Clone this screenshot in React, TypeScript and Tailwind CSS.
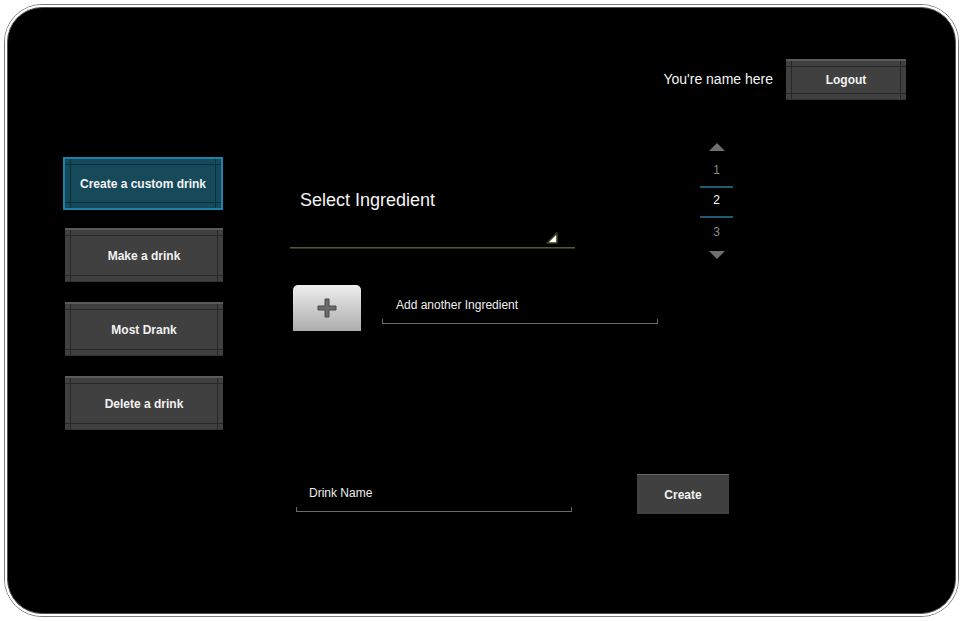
import type { ReactNode } from 'react';

function SliceButton({ label, active = false, className = '' }: { label: string; active?: boolean; className?: string }) {
  const line = active ? 'bg-[#0c2f3b]' : 'bg-[#272727]';
  return (
    <button
      className={`relative flex items-center justify-center font-bold text-[12px] text-[#f2f2f2] ${
        active
          ? 'bg-[#164a5b] border-2 border-[#1d82aa]'
          : 'bg-[#404040] border-t-2 border-t-[#5a5a5a] border-b border-b-[#333]'
      } ${className}`}
    >
      {/* 9-slice grid lines */}
      <span className={`absolute left-0 right-0 top-[5px] h-px ${line}`} />
      <span className={`absolute left-0 right-0 bottom-[5px] h-px ${line}`} />
      <span className={`absolute top-0 bottom-0 left-[5px] w-px ${line}`} />
      <span className={`absolute top-0 bottom-0 right-[5px] w-px ${line}`} />
      <span className="relative">{label}</span>
    </button>
  );
}

function LineField({ label, className = '', textPad = '' }: { label: ReactNode; className?: string; textPad?: string }) {
  return (
    <div className={className}>
      <div className={`text-[12px] leading-[14px] text-[#eeeeee] ${textPad}`}>{label}</div>
      <div className="h-[5px] border-x border-b border-[#6a6a6a]" />
    </div>
  );
}

function Arrow({ up }: { up: boolean }) {
  return (
    <svg width="16" height="8" viewBox="0 0 16 8">
      <polygon points={up ? '8,0 16,8 0,8' : '0,0 16,0 8,8'} fill="#6f6f6f" />
    </svg>
  );
}

export default function App() {
  return (
    <div className="min-h-screen bg-white p-[4px] font-['Liberation_Sans',Arial,sans-serif]">
      <div className="w-[955px] h-[613px] rounded-[38px] border border-[#7a7a7a]">
        <div className="h-full rounded-[37px] border-2 border-white">
          <div className="h-full rounded-[35px] border border-[#555] bg-black overflow-hidden">
            {/* Header */}
            <div className="flex justify-end items-center gap-[13px] pt-[51px] pr-[49px]">
              <span className="text-[14px] text-[#f4f4f4]">You're name here</span>
              <SliceButton label="Logout" className="w-[120px] h-[41px]" />
            </div>

            {/* Body */}
            <div className="flex mt-[41px]">
              {/* Menu */}
              <div className="flex flex-col pl-[55px] pt-[16px]">
                <SliceButton label="Create a custom drink" active className="w-[160px] h-[53px]" />
                <SliceButton label="Make a drink" className="w-[158px] h-[54px] ml-[2px] mt-[18px]" />
                <SliceButton label="Most Drank" className="w-[158px] h-[54px] ml-[2px] mt-[20px]" />
                <SliceButton label="Delete a drink" className="w-[158px] h-[54px] ml-[2px] mt-[20px]" />
              </div>

              {/* Editor */}
              <div className="flex flex-col ml-[67px]">
                <div className="flex">
                  <div className="w-[285px] pt-[49px]">
                    <div className="pl-[10px] text-[18px] leading-[21px] text-[#f4f4f4]">Select Ingredient</div>
                    <div className="flex justify-end pr-[17px] mt-[21px]">
                      <svg width="12" height="12" viewBox="0 0 12 12">
                        <polygon points="11,1 11,11 1,11" fill="#ffffff" stroke="#35401a" strokeWidth="1.6" strokeLinejoin="round" />
                      </svg>
                    </div>
                    <div className="mt-[3px] h-px bg-[#4f5c27]" />
                    <div className="h-px bg-[#2c3314]" />
                  </div>

                  <div className="ml-[125px] w-[33px] flex flex-col items-center text-[12px] leading-[14px]">
                    <div className="mt-[2px]"><Arrow up /></div>
                    <span className="mt-[12px] text-[#8a8a8a]">1</span>
                    <div className="mt-[9px] h-[2px] w-full bg-[#1c5b70]" />
                    <span className="mt-[5px] text-white">2</span>
                    <div className="mt-[9px] h-[2px] w-full bg-[#1c5b70]" />
                    <span className="mt-[7px] text-[#8a8a8a]">3</span>
                    <div className="mt-[12px]"><Arrow up={false} /></div>
                  </div>
                </div>

                {/* Add ingredient row */}
                <div className="flex items-start mt-[26px]">
                  <button className="ml-[3px] w-[68px] h-[46px] rounded-t-[5px] bg-gradient-to-b from-[#efefef] to-[#acacac] flex items-center justify-center">
                    <svg width="22" height="22" viewBox="0 0 22 22">
                      <path
                        d="M9 2h4v7h7v4h-7v7h-4v-7H2V9h7z"
                        fill="#6b6b6b"
                        stroke="#4a4a4a"
                        strokeWidth="1"
                        strokeLinejoin="round"
                      />
                    </svg>
                  </button>
                  <LineField label="Add another Ingredient" className="ml-[21px] w-[276px] pt-[13px]" textPad="pl-[14px] mb-[7px]" />
                </div>

                {/* Name row */}
                <div className="flex items-start mt-[143px]">
                  <LineField label="Drink Name" className="ml-[6px] w-[276px] pt-[12px]" textPad="pl-[13px] mb-[7px]" />
                  <button className="ml-[65px] w-[92px] h-[40px] bg-[#404040] border-t border-t-[#686868] text-[12px] font-bold text-[#f2f2f2]">
                    Create
                  </button>
                </div>
              </div>
            </div>
          </div>
        </div>
      </div>
    </div>
  );
}
